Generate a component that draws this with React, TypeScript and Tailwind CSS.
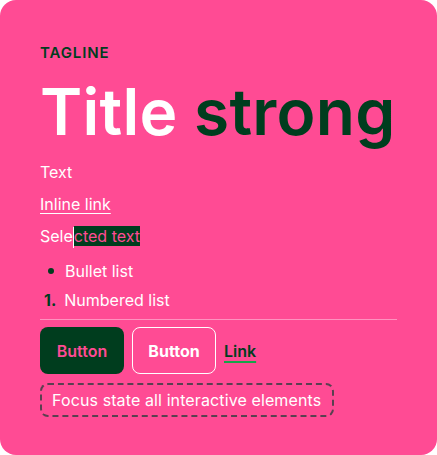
import React from 'react'

const PINK = 'bg-[#ff4b94]'

export default function App() {
  return (
    <div className="w-[437px] h-[455px] bg-white" style={{ fontFamily: 'Inter, "Noto Sans", sans-serif' }}>
      <div className={`flex h-full flex-col rounded-[16px] ${PINK} px-10 pt-[43px]`}>
        {/* Tagline */}
        <p className="text-[15px] font-semibold uppercase leading-5 tracking-[0.06em] text-[#003d1e]">Tagline</p>

        {/* Title */}
        <h1 className="mt-[17px] text-[64px] font-semibold leading-[64px] tracking-[0.004em] text-white">
          Title <strong className="font-semibold text-[#003d1e]">strong</strong>
        </h1>

        <div className="mt-[16px] flex flex-col text-[16px] leading-6 text-white">
          <p>Text</p>
          <p className="mt-2">
            <a href="#" className="underline decoration-1 underline-offset-[3px]">Inline link</a>
          </p>
          <p className="mt-2">
            Sele<span className="inline-block h-[21px] w-px bg-white align-middle" />
            <span className="bg-[#003d1e] text-[#ff4b94]">cted text</span>
          </p>

          {/* Lists */}
          <ul className="mt-[11px] flex flex-col">
            <li className="flex items-center gap-[11px] pl-[8px]">
              <span className="h-[6px] w-[6px] rounded-full bg-[#003d1e]" />
              Bullet list
            </li>
          </ul>
          <ol className="mt-[5px] flex flex-col">
            <li className="flex items-center gap-[8px] pl-[4px]">
              <span className="font-bold text-[#003d1e]">1.</span>
              Numbered list
            </li>
          </ol>
        </div>

        <div className="mt-[7px] h-px w-full bg-white/40" />

        {/* Buttons */}
        <div className="mt-[7px] flex items-center gap-2">
          <button className="h-[47px] w-[84px] rounded-[8px] bg-[#003d1e] text-[16px] font-semibold text-[#ff4b94]">
            Button
          </button>
          <button className="h-[47px] w-[84px] rounded-[8px] border border-white text-[16px] font-bold text-white">
            Button
          </button>
          <a href="#" className="text-[16px] font-semibold text-[#003d1e] underline decoration-[#16a34a] decoration-2 underline-offset-[4px]">
            Link
          </a>
        </div>

        <div className="mt-[9px] self-start rounded-[8px] border-2 border-dashed border-[#5a4050] py-[3px] pl-[10px] pr-[11px] text-[16px] leading-6 tracking-[0.007em] text-white">
          Focus state all interactive elements
        </div>
      </div>
    </div>
  )
}
